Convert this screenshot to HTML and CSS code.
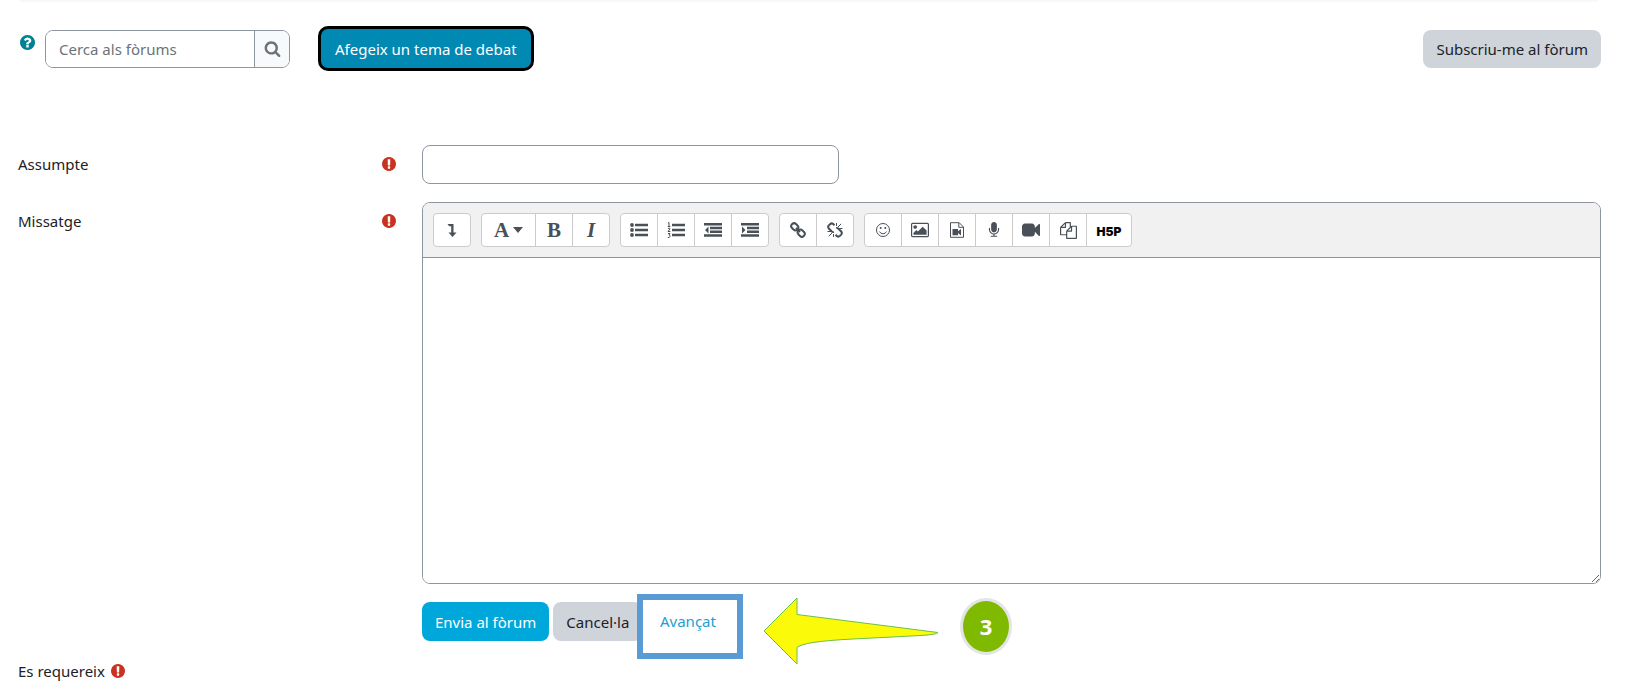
FILE: index.html
```html
<!DOCTYPE html>
<html lang="ca">
<head>
<meta charset="utf-8">
<title>Fòrum</title>
<link rel="stylesheet" href="styles.css">
</head>
<body>
<svg class="defs" aria-hidden="true">
  <symbol id="required" viewBox="128 128 1536 1536"><path d="M896 128q209 0 385.500 103t279.500 279.500 103 385.500-103 385.500-279.500 279.500-385.500 103-385.500-103-279.500-279.500-103-385.500 103-385.500 279.500-279.500 385.500-103zm128 1247v-190q0-14-9-23.500t-22-9.500h-192q-13 0-23 10t-10 23v190q0 13 10 23t23 10h192q13 0 22-9.500t9-23.500zm-2-344l18-621q0-12-10-18-10-8-24-8h-220q-14 0-24 8-10 6-10 18l17 621q0 10 10 17.500t24 7.500h185q14 0 23.500-7.500t10.500-17.500z"/></symbol>
</svg>
<div class="page">
  <div class="strip"></div>
  <header class="topbar">
    <button class="help" type="button" aria-label="Ajuda"><svg viewBox="128 128 1536 1536"><path d="M1024 1376v-192q0-14-9-23t-23-9h-192q-14 0-23 9t-9 23v192q0 14 9 23t23 9h192q14 0 23-9t9-23zm256-672q0-88-55.500-163t-138.500-116-170-41q-243 0-371 213-15 24 8 42l132 100q7 6 19 6 16 0 25-12 53-68 86-92 34-24 86-24 48 0 85.500 26t37.500 59q0 38-20 61t-68 45q-63 28-115.500 86.500t-52.500 125.500v36q0 14 9 23t23 9h192q14 0 23-9t9-23q0-19 21.500-49.500t54.500-49.500q32-18 49-28.500t46-35 44.500-48 28-60.500 12.500-81zm384 192q0 209-103 385.500t-279.500 279.500-385.500 103-385.500-103-279.500-279.500-103-385.500 103-385.500 279.500-279.500 385.500-103 385.500 103 279.500 279.500 103 385.500z"/></svg></button>
    <form class="search" role="search">
      <input type="text" placeholder="Cerca als fòrums" aria-label="Cerca als fòrums">
      <button type="button" aria-label="Cerca"><svg viewBox="0 0 1792 1792"><path d="M1216 832q0-185-131.500-316.500t-316.500-131.500-316.500 131.500-131.500 316.500 131.500 316.500 316.500 131.500 316.500-131.500 131.500-316.500zm512 832q0 52-38 90t-90 38q-54 0-90-38l-343-342q-179 124-399 124-143 0-273.500-55.500t-225-150-150-225-55.500-273.500 55.500-273.500 150-225 225-150 273.500-55.500 273.500 55.500 225 150 150 225 55.500 273.500q0 220-124 399l343 343q37 37 37 90z"/></svg></button>
    </form>
    <button class="btn add" type="button">Afegeix un tema de debat</button>
    <button class="btn secondary subscribe" type="button">Subscriu-me al fòrum</button>
  </header>

  <form class="post">
    <div class="label"><label for="subject">Assumpte</label><svg class="req" role="img" aria-label="Requerit"><use href="#required"/></svg></div>
    <div><input class="subject" id="subject" type="text" required></div>

    <div class="label"><label for="message">Missatge</label><svg class="req" role="img" aria-label="Requerit"><use href="#required"/></svg></div>
    <div class="editor">
      <div class="toolbar" role="toolbar">
        <div class="group">
          <button type="button" aria-label="Mostra més botons"><svg viewBox="0 0 16 16"><path d="M3.500 2H9.500v8.500h3L8.500 15l-4-4.500h2.700V4.200H5.200z"/></svg></button>
        </div>
        <div class="group">
          <button type="button" class="wide" aria-label="Estils"><span class="glyph">A</span><svg class="caret" viewBox="0 0 10 6"><path d="M0 0h10L5 6z"/></svg></button>
          <button type="button" aria-label="Negreta"><span class="glyph">B</span></button>
          <button type="button" aria-label="Cursiva"><span class="glyph italic">I</span></button>
        </div>
        <div class="group">
          <button type="button" aria-label="Llista"><svg class="list" viewBox="0 0 18 16"><circle cx="2" cy="3" r="1.900"/><circle cx="2" cy="8" r="1.900"/><circle cx="2" cy="13" r="1.900"/><path d="M5 1.700h13v2.600H5zM5 6.700h13v2.600H5zM5 11.700h13v2.600H5z"/></svg></button>
          <button type="button" aria-label="Llista numerada"><svg class="list" viewBox="0 0 18 16"><path d="M5 1.700h13v2.600H5zM5 6.700h13v2.600H5zM5 11.700h13v2.600H5z"/><path class="thin" d="M1 1l1-.5V4M.8 4.500h2.500M1 6.500q2-1 2 .5L1 9.500h2.400M1 11.500h2L2 13q1.500 0 1 1.500T.8 15.500"/></svg></button>
          <button type="button" aria-label="Redueix el sagnat"><svg class="list" viewBox="0 0 18 16"><path d="M0 1h18v2.500H0zM6 4.700h12v2.500H6zM6 8.500h12V11H6zM0 12.300h18v2.500H0zM4.500 4.500v7L1 8z"/></svg></button>
          <button type="button" aria-label="Augmenta el sagnat"><svg class="list" viewBox="0 0 18 16"><path d="M0 1h18v2.500H0zM6 4.700h12v2.500H6zM6 8.500h12V11H6zM0 12.300h18v2.500H0zM1 4.500v7L4.500 8z"/></svg></button>
        </div>
        <div class="group">
          <button type="button" aria-label="Enllaç"><svg class="line" viewBox="0 0 16 16"><rect x="1" y="2" width="7.500" height="5.600" rx="2.700" transform="rotate(45 4.750 4.800)"/><rect x="7.500" y="8.400" width="7.500" height="5.600" rx="2.700" transform="rotate(45 11.250 11.200)"/><path d="M6 6l4 4"/></svg></button>
          <button type="button" aria-label="Desenllaça"><svg class="line" viewBox="0 0 16 16"><path d="M7.500 3.300L6 1.800Q4.500.8 3 2.200L1.800 3.400Q.5 5 1.800 6.500l3 3q1 .8 2 .3M8.500 12.700L10 14.200q1.500 1 3-.4l1.200-1.200q1.300-1.600 0-3.100l-3-3q-1-.8-2-.3"/><path class="thin" d="M9.500 4V1M11 5l3.200-3.200M12 6.500h3.500M6.500 12v3M5 11l-3.200 3.200M4 9.500H.5"/></svg></button>
        </div>
        <div class="group">
          <button type="button" aria-label="Emoticones"><svg class="line fine" viewBox="0 0 16 16"><circle cx="8" cy="8" r="6.500"/><path d="M4.600 9.600q1 2.200 3.400 2.200t3.400-2.200"/><circle class="solid" cx="5.700" cy="6" r="1"/><circle class="solid" cx="10.300" cy="6" r="1"/></svg></button>
          <button type="button" aria-label="Imatge"><svg class="picture" viewBox="-64 0 1920 1792"><path d="M576 576q0 80-56 136t-136 56-136-56-56-136 56-136 136-56 136 56 56 136zm1024 384v448h-1408v-192l320-320 160 160 512-512zm96-704h-1600q-13 0-22.500 9.500t-9.500 22.500v1216q0 13 9.500 22.500t22.500 9.500h1600q13 0 22.500-9.500t9.500-22.500v-1216q0-13-9.500-22.500t-22.500-9.500zm160 32v1216q0 66-47 113t-113 47h-1600q-66 0-113-47t-47-113v-1216q0-66 47-113t113-47h1600q66 0 113 47t47 113z"/></svg></button>
          <button type="button" aria-label="Fitxer multimèdia"><svg class="line fine" viewBox="0 0 16 16"><path d="M1.500.7h8.700l4.300 4.300v10.300h-13zM9.800.7v4.600h4.700"/><path class="solid" d="M3.500 7h5.500v2.200l3-2.300v6.500l-3-2.300v2.200H3.500z"/></svg></button>
          <button type="button" aria-label="Enregistra àudio"><svg viewBox="0 0 1792 1792"><path d="M1472 704v128q0 221-147.500 384.500t-364.500 187.500v132h256q26 0 45 19t19 45-19 45-45 19h-640q-26 0-45-19t-19-45 19-45 45-19h256v-132q-217-24-364.500-187.500t-147.500-384.500v-128q0-26 19-45t45-19 45 19 19 45v128q0 185 131.500 316.500t316.500 131.500 316.500-131.500 131.500-316.500v-128q0-26 19-45t45-19 45 19 19 45zm-256-384v512q0 132-94 226t-226 94-226-94-94-226v-512q0-132 94-226t226-94 226 94 94 226z"/></svg></button>
          <button type="button" aria-label="Enregistra vídeo"><svg class="picture" viewBox="0 0 1792 1792"><path d="M1792 352v1088q0 42-39 59-13 5-25 5-27 0-45-19l-403-403v166q0 119-84.500 203.500t-203.500 84.500h-704q-119 0-203.500-84.500t-84.500-203.500v-704q0-119 84.500-203.500t203.500-84.500h704q119 0 203.500 84.500t84.500 203.500v165l403-402q18-19 45-19 12 0 25 5 39 17 39 59z"/></svg></button>
          <button type="button" aria-label="Gestiona fitxers"><svg class="files" viewBox="0 0 1792 1792"><path d="M1696 384q40 0 68 28t28 68v1216q0 40-28 68t-68 28h-960q-40 0-68-28t-28-68v-288h-544q-40 0-68-28t-28-68v-672q0-40 20-88t48-76l408-408q28-28 76-48t88-20h416q40 0 68 28t28 68v328q68-40 128-40h416zm-544 213l-299 299h299v-299zm-640-384l-299 299h299v-299zm196 647l316-316v-416h-384v416q0 40-28 68t-68 28h-416v640h512v-256q0-40 20-88t48-76zm956 804v-1152h-384v416q0 40-28 68t-68 28h-416v640h896z"/></svg></button>
          <button type="button" class="h5p">H5P</button>
        </div>
      </div>
      <textarea id="message" required></textarea>
    </div>

    <div class="actions">
      <button class="btn primary" type="button">Envia al fòrum</button>
      <button class="btn secondary" type="button">Cancel·la</button>
      <a class="advanced" href="#">Avançat</a>
      <svg class="arrow" viewBox="0 0 176 68" aria-hidden="true"><path d="M1 34L34 1v16.500L175 35.500Q174 37.500 158 38.500L90 42Q40 44.500 34 50.500V67z"/></svg>
      <span class="step">3</span>
    </div>
  </form>
  <p class="note">Es requereix <svg class="req" role="img" aria-label="Camp requerit"><use href="#required"/></svg></p>
</div>
</body>
</html>
```
FILE: styles.css
```css
* { box-sizing: border-box; }

body {
  margin: 0;
  background: #fff;
  color: #1d2125;
  font: 15px/24px "Noto Sans", "Open Sans", sans-serif;
  /* keeps the dot of "l·l" apart from the letters */
  font-feature-settings: "locl" 0, "liga" 0;
}

button, input, textarea {
  font: inherit;
  font-feature-settings: inherit;
  color: inherit;
}
button { cursor: pointer; }
svg { display: block; fill: currentColor; }
.defs { position: absolute; width: 0; height: 0; }

.page { padding: 0 43px 0 18px; }

.strip {
  height: 2px;
  margin: 0 3px 0 2px;
  background: #f8f8f8;
  border-radius: 0 0 4px 4px;
}

.topbar {
  display: flex;
  align-items: center;
  padding-top: 24px;
}

.help {
  align-self: flex-start;
  margin: 9px 10px 0 2px;
  padding: 0;
  border: 0;
  background: none;
  color: #008196;
}
.help svg { width: 15px; height: 15px; }

.search {
  display: flex;
  width: 245px;
  height: 38px;
  margin-right: 28px;
  border: 1px solid #8f959e;
  border-radius: 8px;
  overflow: hidden;
}
.search input {
  flex: 1;
  min-width: 0;
  padding: 0 13px;
  border: 0;
  background: #fff;
}
.search input::placeholder { color: #6a737b; opacity: 1; }
.search button {
  display: grid;
  place-items: center;
  width: 35px;
  padding: 0;
  border: 0;
  border-left: 1px solid #8f959e;
  background: #f8f9fa;
  color: #6a737b;
}
.search svg { width: 17px; height: 17px; }

.btn {
  height: 39px;
  padding: 0 13px;
  border: 0;
  border-radius: 8px;
  white-space: nowrap;
}
.primary { background: #00a7da; color: #fff; }
.secondary { background: #ced4da; color: #1d2125; }
.add {
  height: 45px;
  padding: 0 14px;
  border: 3px solid #000;
  border-radius: 10px;
  background: #0089b3;
  color: #fff;
}
.subscribe { height: 38px; margin-left: auto; }

.post {
  display: grid;
  grid-template-columns: minmax(0, 1fr) minmax(0, 3fr);
  gap: 18px 11px;
  padding-top: 74px;
}

.label {
  display: flex;
  align-items: center;
  justify-content: space-between;
  align-self: start;
  height: 38px;
  padding-right: 15px;
}
.req { width: 14px; height: 14px; color: #ca3120; }

.subject {
  display: block;
  width: 417px;
  max-width: 100%;
  height: 39px;
  padding: 0 12px;
  border: 1px solid #8f959e;
  border-radius: 8px;
}

.editor {
  border: 1px solid #8f959e;
  border-radius: 8px;
  overflow: hidden;
}
.toolbar {
  display: flex;
  flex-wrap: wrap;
  gap: 10px;
  padding: 10px;
  background: #f1f1f1;
  border-bottom: 1px solid #8f959e;
}
.group {
  display: flex;
  height: 34px;
  border: 1px solid #ccc;
  border-radius: 4px;
  background: #fff;
  overflow: hidden;
}
.group button {
  display: flex;
  align-items: center;
  justify-content: center;
  gap: 4px;
  width: 37px;
  padding: 0;
  border: 0;
  background: none;
  color: #495057;
}
.group button:first-child { width: 36px; }
.group button + button { border-left: 1px solid #ccc; }
.group .wide:first-child { width: 53px; }
.group svg { width: 16px; height: 16px; }
.group .list, .group .picture { width: 18px; }
.group .picture { height: 18px; }
.group .files { width: 17px; height: 17px; }
.group .caret { width: 10px; height: 6px; }
.glyph { font: bold 21px/24px "Liberation Serif", serif; }
.italic { font-style: italic; }
.line { fill: none; stroke: currentColor; stroke-width: 2; }
.fine { stroke-width: 1; }
.thin { fill: none; stroke: currentColor; stroke-width: 1; }
.solid { fill: currentColor; stroke: none; }
.group .h5p {
  width: 45px;
  padding-top: 3px;
  color: #000;
  font: 900 12px/16px Inter, sans-serif;
}

textarea {
  display: block;
  width: 100%;
  height: 325px;
  padding: 8px 12px;
  border: 0;
  outline: 0;
  resize: vertical;
}

.actions {
  grid-column: 2;
  position: relative;
  display: flex;
  gap: 4px;
}
/* Callouts drawn over the form */
.advanced {
  position: absolute;
  left: 215px;
  top: -8px;
  width: 106px;
  height: 65px;
  padding: 9px 0 0 17px;
  border: 6px solid #5b9bd5;
  background: #fff;
  color: #1c9fd1;
  text-decoration: none;
}
.arrow {
  position: absolute;
  left: 341px;
  top: -5px;
  width: 176px;
  height: 68px;
  fill: #fbfb09;
  stroke: #6cc04a;
  stroke-width: 1;
}
.step {
  position: absolute;
  left: 538px;
  top: -4px;
  width: 52px;
  height: 57px;
  border: 3px solid #e4e4e4;
  border-radius: 50%;
  background: #7fba00;
  color: #fff;
  font-weight: bold;
  font-size: 22px;
  line-height: 51px;
  text-align: center;
}

.note {
  display: flex;
  align-items: center;
  gap: 6px;
  margin: 18px 0 0;
}
```
